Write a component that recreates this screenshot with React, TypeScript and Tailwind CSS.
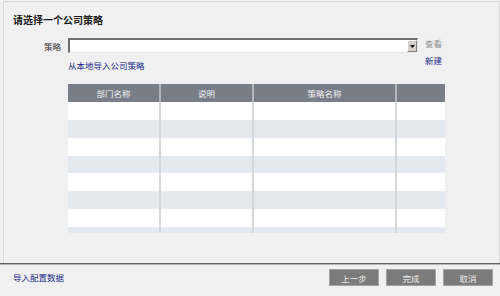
import React from 'react';

const App = () => {
  // row heights measured from the original screen
  const rows = [18, 18, 18, 17, 18, 18, 18, 6];
  const headers = ['部门名称', '说明', '策略名称', ''];

  return (
    <div className="w-[500px] h-[296px] bg-[#f0f0f0] overflow-hidden font-['Noto_Sans_CJK_SC','Noto_Sans',sans-serif] text-[8.5px] leading-[12px] text-[#222]">
      {/* Main panel */}
      <div className="ml-[3px] mt-[1px] w-[497px] h-[262px] border-t border-l border-r border-[#d8d8d8]">
        <div className="pl-[9px] pt-[12px] text-[10px] font-bold text-[#1a1a1a]">请选择一个公司策略</div>

        <div className="flex mt-[11px]">
          <div className="w-[57px] text-right pt-[3px] text-[#333]">策略</div>
          <div className="ml-[7px] w-[350px]">
            <div className="mt-[1px] h-[15px] flex bg-white border-t-2 border-l-2 border-t-[#6e6e6e] border-l-[#6e6e6e] border-r border-b border-r-[#e8e8e8] border-b-[#e8e8e8]">
              <div className="flex-1" />
              <div className="w-[10px] h-full bg-[#d4d0c8] border-t border-l border-white border-r border-b border-r-[#808080] border-b-[#808080] flex items-center justify-center">
                <svg width="5" height="3" viewBox="0 0 5 3">
                  <path d="M0 0 H5 L2.5 3 Z" fill="#000" />
                </svg>
              </div>
            </div>
            <div className="mt-[6px] text-[#22288a]">从本地导入公司策略</div>
          </div>
          <div className="ml-[7px]">
            <div className="text-[#8c8c8c]">查看</div>
            <div className="mt-[5px] text-[#22288a]">新建</div>
          </div>
        </div>

        {/* Table */}
        <div className="ml-[64px] mt-[13px] w-[377px]">
          <div className="grid grid-cols-[91px_93px_143px_50px] h-[18px] bg-[#787d86] text-[#f2f2f2]">
            {headers.map((h, i) => (
              <div key={i} className={`flex items-center justify-center ${i > 0 ? 'border-l-2 border-[#b4b8be]' : ''}`}>
                {h}
              </div>
            ))}
          </div>
          {rows.map((height, r) => (
            <div
              key={r}
              className={`grid grid-cols-[91px_93px_143px_50px] ${r % 2 === 1 ? 'bg-[#e4e8ef]' : 'bg-white'}`}
              style={{ height }}
            >
              <div />
              <div className="border-l-2 border-[#d4d6da]" />
              <div className="border-l-2 border-[#d4d6da]" />
              <div className="border-l-2 border-[#d4d6da]" />
            </div>
          ))}
        </div>
      </div>

      {/* Footer separator */}
      <div className="h-[1px] bg-[#5f5f5f]" />
      <div className="h-[1px] bg-[#b8b8b8]" />

      {/* Footer */}
      <div className="flex items-start justify-between pl-[13px] pr-[7px] pt-[4px]">
        <div className="mt-[2px] text-[#22288a]">导入配置数据</div>
        <div className="flex gap-[7px]">
          {['上一步', '完成', '取消'].map((b) => (
            <button
              key={b}
              className="w-[50px] h-[17px] bg-[#7b7b7b] border border-[#a3a3a3] text-[#ececec] text-[8.5px] leading-[12px] flex items-center justify-center"
            >
              {b}
            </button>
          ))}
        </div>
      </div>
    </div>
  );
};

export default App;
